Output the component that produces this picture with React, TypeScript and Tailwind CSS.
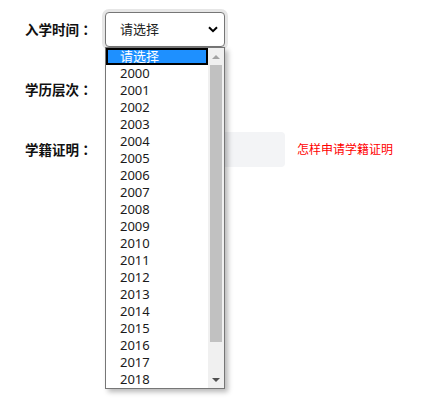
import React from 'react';

const years = Array.from({ length: 19 }, (_, i) => String(2000 + i));

const font = { fontFamily: '"Noto Sans", "Noto Sans CJK SC", sans-serif' };
const cjk = { fontFamily: '"Noto Sans CJK SC", sans-serif' };
const colonFont = { fontFamily: '"Noto Sans CJK TC", sans-serif' };

const Chevron: React.FC = () => (
    <svg width="10" height="7" viewBox="0 0 10 7" className="text-black">
        <path d="M1 1.2 L5 5.2 L9 1.2" fill="none" stroke="currentColor" strokeWidth="2" />
    </svg>
);

const DropdownList: React.FC = () => (
    <div className="absolute left-0 top-[35px] z-10 flex h-[342px] w-[120px] border border-[#767676] bg-white shadow-[3px_3px_5px_rgba(0,0,0,0.28)]">
        <div className="flex-1 overflow-hidden">
            <div className="h-[17px] border-2 border-black bg-[#1e90ff] pl-[12px] text-[13px] leading-[13px] text-white">请选择</div>
            {years.map(y => (
                <div key={y} className="h-[17px] pl-[14px] text-[13px] leading-[17px] text-[#1a1a1a]">{y}</div>
            ))}
        </div>
        <div className="flex w-[16px] flex-col bg-[#f0f0f0]">
            <div className="flex h-[17px] items-center justify-center">
                <div className="h-0 w-0 border-x-[4px] border-b-[4px] border-x-transparent border-b-[#a3a3a3]" />
            </div>
            <div className="mx-[2px] h-[277px] bg-[#c1c1c1]" />
            <div className="flex-1" />
            <div className="flex h-[17px] items-center justify-center">
                <div className="h-0 w-0 border-x-[4px] border-t-[4px] border-x-transparent border-t-[#505050]" />
            </div>
        </div>
    </div>
);

const Label: React.FC<{ text: string }> = ({ text }) => (
    <span className="w-[80px] whitespace-nowrap text-[13.5px] font-bold text-[#111]" style={cjk}>
        {text}
        <span style={colonFont}>：</span>
    </span>
);

const App: React.FC = () => {
    return (
        <div className="h-[404px] w-[437px] bg-white pt-[12px] pl-[25px]" style={font}>
            <div className="flex h-[35px] items-center">
                <Label text="入学时间" />
                <div className="relative">
                    <div className="flex h-[35px] w-[120px] items-center justify-between rounded-[4px] border border-[#767676] bg-white pl-[14px] pr-[6px] text-[13px] text-[#222] shadow-[0_0_0_3px_#e6e6e6]">
                        <span>请选择</span>
                        <Chevron />
                    </div>
                    <DropdownList />
                </div>
            </div>
            <div className="mt-[25px] flex h-[35px] items-center">
                <Label text="学历层次" />
                <div className="h-[35px] w-[120px] rounded-[4px] border border-[#767676] bg-white" />
            </div>
            <div className="mt-[25px] flex h-[35px] items-center">
                <Label text="学籍证明" />
                <div className="h-[35px] w-[180px] rounded-[4px] bg-[#f3f4f6]" />
                <a className="ml-[12px] text-[12px] text-[#ff0000]">怎样申请学籍证明</a>
            </div>
        </div>
    );
};

export default App;
